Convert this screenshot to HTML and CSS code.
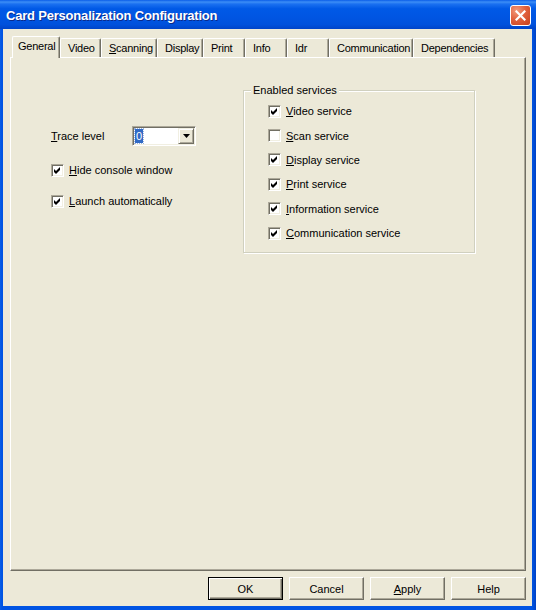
FILE: index.html
```html
<!DOCTYPE html>
<html>
<head>
<meta charset="utf-8">
<link rel="stylesheet" href="styles.css">
</head>
<body>
<div class="window">
  <div class="titlebar">
    <span class="title">Card Personalization Configuration</span>
    <span class="close">
      <svg width="11" height="11" viewBox="0 0 11 11"><path d="M1.5 1.5 L9.5 9.5 M9.5 1.5 L1.5 9.5" stroke="#fff" stroke-width="2.2" stroke-linecap="square"/></svg>
    </span>
  </div>
  <div class="client">
    <div class="tabs">
      <div class="tab sel w-general">General</div>
      <div class="tab w-video">Video</div>
      <div class="tab w-scanning"><u>S</u>canning</div>
      <div class="tab w-display">Display</div>
      <div class="tab w-min">Print</div>
      <div class="tab w-min">Info</div>
      <div class="tab w-min">Idr</div>
      <div class="tab w-comm">Communication</div>
      <div class="tab w-dep">Dependencies</div>
    </div>
    <div class="panel">
      <div class="leftcol">
        <div class="trace-row">
          <span class="trace-label"><u>T</u>race level</span>
          <div class="combo">
            <span class="combo-field"><span class="combo-sel">0</span></span>
            <span class="combo-btn"><svg width="7" height="4" viewBox="0 0 7 4"><path d="M0 0 H7 L3.5 4 Z" fill="#000"/></svg></span>
          </div>
        </div>
        <div class="check row-hide">
          <span class="cb"><svg width="11" height="11" viewBox="0 0 11 11"><path d="M2 4 L4 6 L8 2 L8 5 L4 9 L2 7 Z" fill="#000"/></svg></span>
          <span class="ctext"><u>H</u>ide console window</span>
        </div>
        <div class="check row-launch">
          <span class="cb"><svg width="11" height="11" viewBox="0 0 11 11"><path d="M2 4 L4 6 L8 2 L8 5 L4 9 L2 7 Z" fill="#000"/></svg></span>
          <span class="ctext"><u>L</u>aunch automatically</span>
        </div>
      </div>
      <fieldset class="group">
        <legend>Enabled services</legend>
        <div class="grow">
          <span class="cb"><svg width="11" height="11" viewBox="0 0 11 11"><path d="M2 4 L4 6 L8 2 L8 5 L4 9 L2 7 Z" fill="#000"/></svg></span>
          <span class="ctext"><u>V</u>ideo service</span>
        </div>
        <div class="grow">
          <span class="cb"></span>
          <span class="ctext"><u>S</u>can service</span>
        </div>
        <div class="grow">
          <span class="cb"><svg width="11" height="11" viewBox="0 0 11 11"><path d="M2 4 L4 6 L8 2 L8 5 L4 9 L2 7 Z" fill="#000"/></svg></span>
          <span class="ctext"><u>D</u>isplay service</span>
        </div>
        <div class="grow">
          <span class="cb"><svg width="11" height="11" viewBox="0 0 11 11"><path d="M2 4 L4 6 L8 2 L8 5 L4 9 L2 7 Z" fill="#000"/></svg></span>
          <span class="ctext"><u>P</u>rint service</span>
        </div>
        <div class="grow">
          <span class="cb"><svg width="11" height="11" viewBox="0 0 11 11"><path d="M2 4 L4 6 L8 2 L8 5 L4 9 L2 7 Z" fill="#000"/></svg></span>
          <span class="ctext"><u>I</u>nformation service</span>
        </div>
        <div class="grow">
          <span class="cb"><svg width="11" height="11" viewBox="0 0 11 11"><path d="M2 4 L4 6 L8 2 L8 5 L4 9 L2 7 Z" fill="#000"/></svg></span>
          <span class="ctext"><u>C</u>ommunication service</span>
        </div>
      </fieldset>
    </div>
    <div class="buttons">
      <div class="btn default">OK</div>
      <div class="btn">Cancel</div>
      <div class="btn"><u>A</u>pply</div>
      <div class="btn">Help</div>
    </div>
  </div>
</div>
</body>
</html>
```
FILE: styles.css
```css
html, body {
  margin: 0;
  padding: 0;
  background: #0054e3;
}
.window {
  width: 536px;
  height: 610px;
  box-sizing: border-box;
  display: flex;
  flex-direction: column;
  background: linear-gradient(to right, #0a5ee6 0, #0054e3 2px, #0054e3 532px, #0041c4 536px);
  font-family: "Liberation Sans", Arial, sans-serif;
  font-size: 11px;
  color: #000;
  overflow: hidden;
}
.titlebar {
  height: 29px;
  flex: none;
  display: flex;
  align-items: center;
  justify-content: space-between;
  padding: 1px 5px 0 6px;
  box-sizing: border-box;
  background: linear-gradient(to bottom, #0a5de8 0%, #3c8ef6 7%, #1a70f0 14%, #0059e6 30%, #0055e2 60%, #0051dc 85%, #0044c8 100%);
}
.title {
  color: #fff;
  font-weight: bold;
  font-size: 13px;
  letter-spacing: -0.2px;
  text-shadow: 1px 1px 0 #0b2a8a;
}
.close {
  width: 21px;
  height: 21px;
  box-sizing: border-box;
  border: 1px solid #fff;
  border-radius: 3px;
  background: radial-gradient(circle at 30% 25%, #f29a7c 0%, #e1623f 45%, #c8401b 100%);
  display: flex;
  align-items: center;
  justify-content: center;
}
.client {
  flex: 1;
  margin: 0 4px 4px 3px;
  background: #ece9d8;
  padding: 7px 6px 0 7px;
  display: flex;
  flex-direction: column;
}
.tabs {
  height: 21px;
  display: flex;
  align-items: flex-end;
  padding-left: 2px;
  position: relative;
  z-index: 1;
}
.tab {
  height: 19px;
  box-sizing: border-box;
  padding: 3px 0 0 7px;
  border-top: 1px solid #fff;
  border-left: 1px solid #fff;
  border-right: 1px solid #716f64;
  box-shadow: inset -1px 0 0 #aca899;
  border-radius: 2px 2px 0 0;
  background: #ece9d8;
  white-space: nowrap;
  letter-spacing: -0.25px;
  line-height: 13px;
}
.tab.sel {
  height: 22px;
  margin-bottom: -1px;
  padding: 3px 0 0 5px;
}
.w-general { width: 48px; }
.w-video { width: 41px; }
.w-scanning { width: 56px; }
.w-display { width: 46px; }
.w-min { width: 42px; }
.w-comm { width: 84px; }
.w-dep { width: 82px; }

.panel {
  height: 514px;
  box-sizing: border-box;
  border: 1px solid;
  border-color: #fff #716f64 #716f64 #fff;
  box-shadow: inset -1px -1px 0 #aca899;
  display: flex;
  align-items: flex-start;
}
.leftcol {
  margin: 68px 0 0 40px;
  width: 145px;
  display: flex;
  flex-direction: column;
}
.trace-row {
  height: 20px;
  display: flex;
  align-items: center;
}
.trace-label {
  width: 81px;
}
.combo {
  width: 64px;
  height: 20px;
  box-sizing: border-box;
  border: 1px solid;
  border-color: #aca899 #fff #fff #aca899;
  box-shadow: inset 1px 1px 0 #716f64, inset -1px -1px 0 #f1efe2;
  background: #fff;
  padding: 1px;
  display: flex;
}
.combo-field {
  flex: 1;
  display: flex;
  align-items: center;
  padding-left: 1px;
}
.combo-sel {
  background: #316ac5;
  color: #fff;
  padding: 0 1px;
  line-height: 14px;
  outline: 1px dotted #9ab4e0;
}
.combo-btn {
  width: 16px;
  height: 16px;
  box-sizing: border-box;
  background: #ece9d8;
  border: 1px solid;
  border-color: #f1efe2 #716f64 #716f64 #f1efe2;
  box-shadow: inset 1px 1px 0 #fff, inset -1px -1px 0 #aca899;
  display: flex;
  align-items: center;
  justify-content: center;
}
.check {
  height: 16px;
  display: flex;
  align-items: center;
}
.row-hide { margin-top: 16px; }
.row-launch { margin-top: 15px; }
.cb {
  width: 13px;
  height: 13px;
  flex: none;
  box-sizing: border-box;
  background: #fff;
  border: 1px solid;
  border-color: #aca899 #fff #fff #aca899;
  box-shadow: inset 1px 1px 0 #716f64, inset -1px -1px 0 #f1efe2;
  display: flex;
}
.ctext {
  margin-left: 5px;
  white-space: nowrap;
}
.group {
  margin: 26px 0 0 47px;
  width: 232px;
  height: 169px;
  box-sizing: border-box;
  border: 1px solid #d0d0bf;
  box-shadow: 1px 1px 0 #fff, inset 1px 1px 0 #fff;
  padding: 2px 0 0 24px;
  min-inline-size: 0;
}
.group legend {
  margin-left: -17px;
  padding: 0 2px;
  line-height: 13px;
  background: #ece9d8;
}
.grow {
  height: 24.4px;
  display: flex;
  align-items: center;
}
.buttons {
  margin-top: 6px;
  display: flex;
  justify-content: flex-end;
  gap: 6px;
}
.btn {
  width: 75px;
  height: 23px;
  box-sizing: border-box;
  border: 1px solid;
  border-color: #fff #716f64 #716f64 #fff;
  box-shadow: inset -1px -1px 0 #aca899;
  display: flex;
  align-items: center;
  justify-content: center;
  background: #ece9d8;
}
.btn.default {
  border: 1px solid #000;
  box-shadow: inset 1px 1px 0 #fff, inset -1px -1px 0 #716f64, inset -2px -2px 0 #aca899;
}
```
